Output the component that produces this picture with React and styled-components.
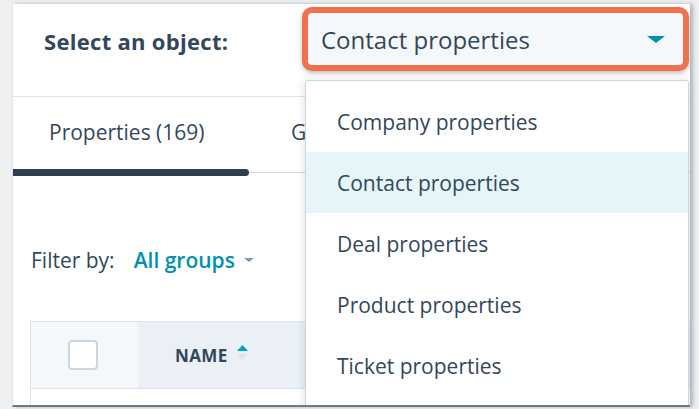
import React from 'react'
import styled, { createGlobalStyle } from 'styled-components'

const GlobalStyle = createGlobalStyle`
  html, body {
    margin: 0;
    padding: 0;
    background: #eef0f2;
    overflow: hidden;
  }
  body {
    font-family: "Open Sans", "Noto Sans", sans-serif;
    color: #33475b;
  }
`

const Page = styled.div`
  width: 699px;
  height: 409px;
  padding: 4px 0 0 12px;
  box-sizing: border-box;
`

const Card = styled.div`
  position: relative;
  width: 678px;
  height: 403px;
  background: #fff;
  border-left: 1px solid #e3e6e9;
  border-bottom: 2px solid #6f7a85;
  box-shadow: 3px 0 4px rgba(60, 70, 80, 0.35);
  box-sizing: border-box;
  overflow: hidden;
`

const Header = styled.div`
  display: flex;
  align-items: flex-start;
  height: 93px;
  padding: 3px 0 0 31px;
  border-bottom: 1px solid #dfe3eb;
  box-sizing: border-box;
`

const ObjectLabel = styled.div`
  width: 258px;
  padding-top: 19px;
  font-size: 22px;
  font-weight: 700;
  letter-spacing: 0.3px;
`

const Highlight = styled.div`
  width: 387px;
  height: 64px;
  border: 6px solid #f0714d;
  border-radius: 10px;
  box-shadow: 0 2px 4px rgba(80, 60, 50, 0.35);
  box-sizing: border-box;
  background: #f5f8fa;
  display: flex;
  align-items: center;
  justify-content: space-between;
  padding: 0 18px 0 13px;
`

const SelectText = styled.span`
  font-size: 24px;
  color: #33475b;
`

const Caret = styled.span`
  width: 0;
  height: 0;
  border-left: ${p => p.size}px solid transparent;
  border-right: ${p => p.size}px solid transparent;
  border-top: ${p => p.size * 0.8}px solid ${p => p.color};
  margin-left: ${p => p.gap || 0}px;
`

const TabBar = styled.div`
  display: flex;
  align-items: flex-end;
  height: 75px;
  border-bottom: 1px solid #cbd6e2;
  margin-left: -4px;
`

const Tab = styled.div`
  display: flex;
  flex-direction: column;
  width: ${p => p.width}px;
  margin-bottom: -4px;
`

const TabLabel = styled.div`
  font-size: 21px;
  padding-left: ${p => p.indent}px;
  padding-bottom: 23px;
  color: #33475b;
`

const Indicator = styled.div`
  height: 7px;
  border-radius: 4px;
  background: ${p => (p.active ? '#2d3e50' : 'transparent')};
`

const FilterRow = styled.div`
  display: flex;
  align-items: center;
  height: 148px;
  padding-left: 18px;
  padding-top: 26px;
  box-sizing: border-box;
  font-size: 21px;
`

const FilterLabel = styled.span`
  color: #33475b;
  margin-right: 19px;
`

const FilterValue = styled.span`
  color: #0091ae;
  font-weight: 600;
`

const Table = styled.div`
  margin-left: 17px;
  border-left: 1px solid #dfe3eb;
`

const HeaderRow = styled.div`
  display: flex;
  height: 68px;
  border-top: 1px solid #dfe3eb;
  border-bottom: 1px solid #dfe3eb;
  box-sizing: border-box;
`

const BodyRow = styled.div`
  height: 24px;
  background: #fff;
`

const HeaderCell = styled.div`
  display: flex;
  align-items: center;
  justify-content: ${p => (p.center ? 'center' : 'flex-start')};
  width: ${p => (p.width ? `${p.width}px` : 'auto')};
  flex: ${p => (p.width ? 'none' : '1')};
  padding-left: ${p => p.indent || 0}px;
  background: ${p => p.bg};
`

const Checkbox = styled.div`
  width: 30px;
  height: 30px;
  border: 2px solid #cbd6e2;
  border-radius: 4px;
  box-sizing: border-box;
  background: #fff;
  margin-left: -4px;
`

const ColumnName = styled.span`
  font-size: 17px;
  font-weight: 700;
  letter-spacing: 0.4px;
  color: #33475b;
`

const SortIcon = styled.svg`
  margin-left: 9px;
  margin-top: -4px;
`

const Menu = styled.div`
  position: absolute;
  left: 292px;
  top: 76px;
  width: 384px;
  height: 340px;
  padding-top: 10px;
  background: #fff;
  border: 1px solid #cbd6e2;
  border-radius: 3px;
  box-shadow: 0 1px 10px rgba(45, 62, 80, 0.18);
  box-sizing: border-box;
`

const MenuItem = styled.div`
  display: flex;
  align-items: center;
  height: 61px;
  padding-left: 31px;
  font-size: 21px;
  color: #33475b;
  background: ${p => (p.selected ? '#e5f5f8' : 'transparent')};
`

const objects = [
  'Company properties',
  'Contact properties',
  'Deal properties',
  'Product properties',
  'Ticket properties',
]

export default function App() {
  return (
    <>
      <GlobalStyle />
      <Page>
        <Card>
          <Header>
            <ObjectLabel>Select an object:</ObjectLabel>
            <Highlight>
              <SelectText>Contact properties</SelectText>
              <Caret size={9} color="#0091ae" />
            </Highlight>
          </Header>
          <TabBar>
            <Tab width={240}>
              <TabLabel indent={40}>Properties (169)</TabLabel>
              <Indicator active />
            </Tab>
            <Tab width={200}>
              <TabLabel indent={42}>Groups</TabLabel>
              <Indicator />
            </Tab>
          </TabBar>
          <FilterRow>
            <FilterLabel>Filter by:</FilterLabel>
            <FilterValue>All groups</FilterValue>
            <Caret size={5.5} color="#7c98b6" gap={9} />
          </FilterRow>
          <Table>
            <HeaderRow>
              <HeaderCell width={107} center bg="#f5f8fa">
                <Checkbox />
              </HeaderCell>
              <HeaderCell indent={37} bg="#eaf0f6">
                <ColumnName>NAME</ColumnName>
                <SortIcon width="11" height="16" viewBox="0 0 11 16">
                  <path d="M5.5 0 L11 6 L0 6 Z" fill="#00a4bd" />
                  <path d="M0 9 L11 9 L5.5 15 Z" fill="#dfe3eb" />
                </SortIcon>
              </HeaderCell>
            </HeaderRow>
            <BodyRow />
          </Table>
          <Menu>
            {objects.map(name => (
              <MenuItem key={name} selected={name === 'Contact properties'}>
                {name}
              </MenuItem>
            ))}
          </Menu>
        </Card>
      </Page>
    </>
  )
}
